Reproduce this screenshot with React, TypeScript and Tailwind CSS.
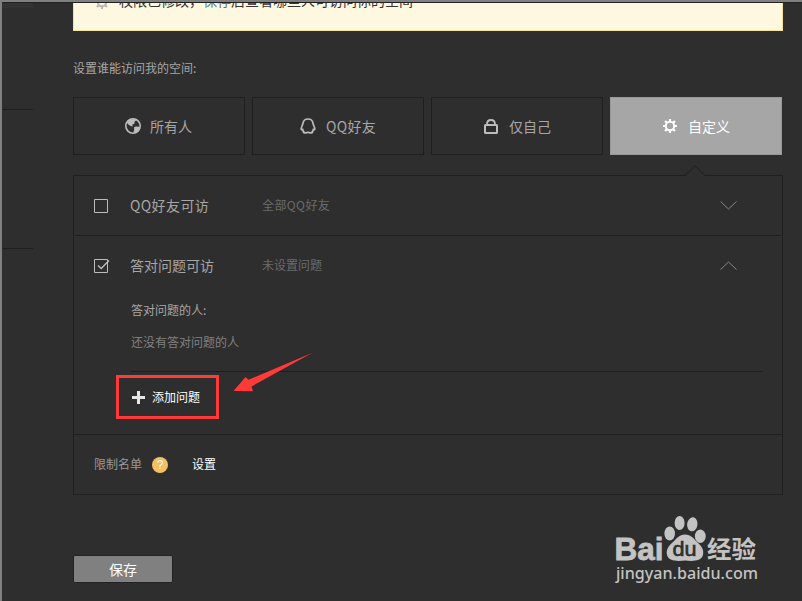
import type { ReactNode } from "react";
import clsx from "clsx";

type AccessTab = {
    label: string;
    icon: ReactNode;
    spacing: string;
    active?: boolean;
};

const tabs: AccessTab[] = [
    { label: "所有人", icon: <GlobeIcon />, spacing: "gap-[9px] pl-[51px]" },
    { label: "QQ好友", icon: <PenguinIcon />, spacing: "gap-[10px] pl-[47px] tracking-[0.3px]" },
    { label: "仅自己", icon: <LockIcon />, spacing: "gap-[10px] pl-[51px]" },
    { label: "自定义", icon: <GearIcon />, spacing: "gap-[10px] pl-[51px]", active: true },
];

export default function App() {
    return (
        <div className="relative flex h-[601px] w-[802px] overflow-hidden border-t-2 border-l-2 border-[#808080] bg-[#2e2e2e] font-['Noto_Sans_CJK_SC',sans-serif] text-xs text-[#a6a6a6]">
            <Sidebar />

            <main className="ml-10 flex w-[710px] flex-col">
                <Notice />

                <p className="mt-[27px] h-5 leading-5 whitespace-nowrap">设置谁能访问我的空间:</p>

                <div className="mt-[19px] flex gap-[7px]">
                    {tabs.map((tab) => (
                        <TabButton key={tab.label} tab={tab} />
                    ))}
                </div>

                <AccessPanel />

                <button
                    type="button"
                    className="mt-[60px] h-7 w-[100px] rounded-[2px] border border-[#222] bg-[#808080] text-sm leading-[26px] text-white"
                >
                    保存
                </button>
            </main>

            <div className="absolute top-0 left-0 h-px w-full bg-[#202020]" />
            <div className="absolute -top-0.5 left-[399px] h-0.5 w-[3px] border-l border-[#3b6ea5] bg-white" />
            <div className="absolute top-[299px] -left-0.5 h-[3px] w-0.5 border-t border-[#3b6ea5] bg-white" />
            <Arrow />
            <Watermark />
        </div>
    );
}

function Sidebar() {
    return (
        <aside className="flex w-[31px] shrink-0 flex-col">
            <div className="mt-px h-[5px] bg-[#333]" />
            <div className="mt-[101px] h-px bg-[#1f1f1f]" />
            <div className="mt-[138px] h-px bg-[#1f1f1f]" />
        </aside>
    );
}

function Notice() {
    return (
        <div className="flex h-[29px] shrink-0 items-start overflow-hidden border border-[#f5e29b] bg-[#fff8e1] pl-5 text-sm text-[#333]">
            <span className="-mt-[9px] text-[#b8b8b8]">
                <GearIcon />
            </span>
            <p className="-mt-[13px] ml-[9px] leading-5 whitespace-nowrap">
                权限已修改，<span className="text-[#4b76a5]">保存</span>后查看哪些人可访问你的空间
            </p>
        </div>
    );
}

function TabButton({ tab }: { tab: AccessTab }) {
    return (
        <button
            type="button"
            className={clsx(
                "flex h-[58px] w-[172px] items-center border pb-px text-left text-sm whitespace-nowrap",
                tab.spacing,
                tab.active
                    ? "border-[#999] bg-[#a6a6a6] text-white"
                    : "border-[#1f1f1f] text-[#a6a6a6]",
            )}
        >
            <span className={tab.active ? "text-white" : "text-[#bcbcbc]"}>{tab.icon}</span>
            <span className="leading-5">{tab.label}</span>
        </button>
    );
}

function AccessPanel() {
    return (
        <section className="relative mt-5 h-80 border border-[#1f1f1f]">
            <svg className="absolute -top-[11px] left-[610px]" width="22" height="12" viewBox="0 0 22 12">
                <path d="M1 11.5 11 1l10 10.5Z" fill="#2e2e2e" />
                <path d="M1 10.5 11 .8l10 9.7" fill="none" stroke="#1f1f1f" />
            </svg>

            <AccessRow label="QQ好友可访" value="全部QQ好友" />

            <div className="h-[200px] border-y border-[#1f1f1f]">
                <AccessRow label="答对问题可访" value="未设置问题" open />

                <div className="mr-5 ml-14 h-[77px] border-b border-[#1f1f1f] pt-[5px] pl-px whitespace-nowrap">
                    <p className="leading-5">答对问题的人:</p>
                    <p className="mt-3 leading-5 text-[#808080]">还没有答对问题的人</p>
                </div>

                <button
                    type="button"
                    className="mt-[3px] ml-[42px] flex h-11 w-[103px] items-center gap-[7px] border-3 border-[#ff3a38] pl-[13px] whitespace-nowrap text-white"
                >
                    <svg width="13" height="13" viewBox="0 0 13 13" fill="#e6e6e6">
                        <path d="M5 0h3v5h5v3H8v5H5V8H0V5h5Z" />
                    </svg>
                    添加问题
                </button>
            </div>

            <div className="flex h-[59px] items-center pl-5 whitespace-nowrap">
                <span className="pb-0.5 text-[#999]">限制名单</span>
                <span className="mt-px ml-[10px] grid size-4 place-items-center rounded-full bg-[#f5c061] font-['Liberation_Sans',sans-serif] text-xs leading-4 text-white">
                    ?
                </span>
                <a className="ml-6 pb-0.5 text-white">设置</a>
            </div>
        </section>
    );
}

type AccessRowProps = {
    label: string;
    value: string;
    open?: boolean;
};

function AccessRow({ label, value, open = false }: AccessRowProps) {
    return (
        <div
            className={clsx(
                "flex h-[59px] items-center pl-5 whitespace-nowrap",
                !open && "tracking-[0.4px]",
            )}
        >
            <svg width="16" height="16" viewBox="0 0 16 16" fill="none">
                <path d="M.5 1.5h13v13H.5Z" stroke="#bcbcbc" />
                {open && <path d="m4 7.5 3.2 3L15 2.5" stroke="#bcbcbc" strokeWidth="1.4" />}
            </svg>
            <span className="ml-5 w-[132px] pb-0.5 text-sm">{label}</span>
            <span className="w-[458px] pb-0.5 text-[#6b6b6b]">{value}</span>
            <svg
                className={clsx("shrink-0", open && "rotate-180")}
                width="17"
                height="9"
                viewBox="0 0 17 9"
                fill="none"
                stroke="#858585"
            >
                <path d="m.5.5 8 7.5 8-7.5" />
            </svg>
        </div>
    );
}

function GlobeIcon() {
    return (
        <svg width="16" height="16" viewBox="0 0 16 16">
            <circle cx="8" cy="8" r="7.2" fill="none" stroke="currentColor" strokeWidth="1.6" />
            <path
                d="M2 4.2 5.2 1.3 10.5 1l.6 1.6-1.5 1-.3 2.3-1.8.4.2 2.2-2.6-.7L2.8 6ZM9 9.2l2-.7 3.3.3.4.8-1.5 3.2-2.8 1.8-2-.4.8-2.5Z"
                fill="currentColor"
            />
        </svg>
    );
}

function PenguinIcon() {
    return (
        <svg width="16" height="16" viewBox="0 0 16 16" fill="none" stroke="currentColor" strokeWidth="1.7">
            <path d="M8 1C5 1 3.4 2.800 3 5.200 2.700 7.200 1.200 9 1.200 11.200c.2.600.900.500 1.400.3.200.800.500 1.300 1 1.800-.4.500-.2 1.200.5 1.400 1.400.3 2.800.2 3.900-.4 1.100.6 2.500.7 3.900.4.700-.2.900-.9.500-1.400.5-.5.800-1 1-1.800.5.200 1.200.3 1.400-.3C14.800 9 13.300 7.200 13 5.200 12.600 2.800 11 1 8 1Z" />
        </svg>
    );
}

function LockIcon() {
    return (
        <svg width="16" height="16" viewBox="0 0 16 16" fill="none" stroke="currentColor">
            <path d="M4 6.5C4 3.800 5.600 2 8 2s4 1.800 4 4.500" strokeWidth="1.8" />
            <rect x="2" y="7" width="12" height="8" rx=".5" strokeWidth="2" />
        </svg>
    );
}

function GearIcon() {
    return (
        <svg width="16" height="16" viewBox="0 0 16 16" fill="none" stroke="currentColor">
            <circle cx="8" cy="8" r="4.2" strokeWidth="2" />
            <path
                d="M8 1v2.5M8 12.5V15M1 8h2.5M12.5 8H15M3 3l1.8 1.8M11.2 11.2 13 13M13 3l-1.8 1.8M4.8 11.2 3 13"
                strokeWidth="2.2"
            />
        </svg>
    );
}

function Arrow() {
    return (
        <svg className="absolute top-[348px] left-[230px]" width="84" height="44" viewBox="0 0 84 44">
            <path d="M1.5 41 13.5 27l3 2.7L81 2.5 19.5 36.5l1.5 4.8Z" fill="#ff3a38" />
        </svg>
    );
}

function Watermark() {
    return (
        <svg className="absolute top-[498px] left-[598px]" width="202" height="101" viewBox="0 0 202 101">
            <g fill="#c3c3c3">
                <text
                    x="14.5"
                    y="60"
                    fontSize="32"
                    fontWeight="bold"
                    fontFamily="Liberation Sans, sans-serif"
                    textLength="49"
                    lengthAdjust="spacingAndGlyphs"
                    stroke="#c3c3c3"
                    strokeWidth=".8"
                >
                    Bai
                </text>
                <ellipse cx="69.7" cy="33.5" rx="5.3" ry="7" />
                <ellipse cx="79.6" cy="23" rx="5" ry="7" />
                <ellipse cx="92.3" cy="24.3" rx="5.2" ry="7" transform="rotate(8 92.3 24.3)" />
                <ellipse cx="100.3" cy="36.3" rx="5.4" ry="6.7" />
                <path d="M85 34.5c6 0 8.500 4 12 7.500 4.500 4 7.500 8 5.800 13.500-1.800 5.300-8.800 6-17.800 5-9 1-16 .3-17.800-5-1.700-5.500 1.300-9.500 5.800-13.500 4-3.500 6-7.500 12-7.500Z" />
                <text
                    x="107"
                    y="58"
                    fontSize="24"
                    fontWeight="bold"
                    fontFamily="Noto Sans CJK SC, sans-serif"
                    textLength="49"
                    lengthAdjust="spacingAndGlyphs"
                >
                    经验
                </text>
                <text
                    x="16"
                    y="79"
                    fontSize="16"
                    fontWeight="500"
                    fontFamily="Noto Sans, sans-serif"
                    textLength="142"
                    lengthAdjust="spacingAndGlyphs"
                >
                    jingyan.baidu.com
                </text>
            </g>
            <text
                x="72.5"
                y="56"
                fontSize="20"
                fontFamily="Liberation Sans, sans-serif"
                textLength="24"
                lengthAdjust="spacingAndGlyphs"
                fill="#2e2e2e"
                stroke="#2e2e2e"
                strokeWidth=".6"
            >
                du
            </text>
        </svg>
    );
}
